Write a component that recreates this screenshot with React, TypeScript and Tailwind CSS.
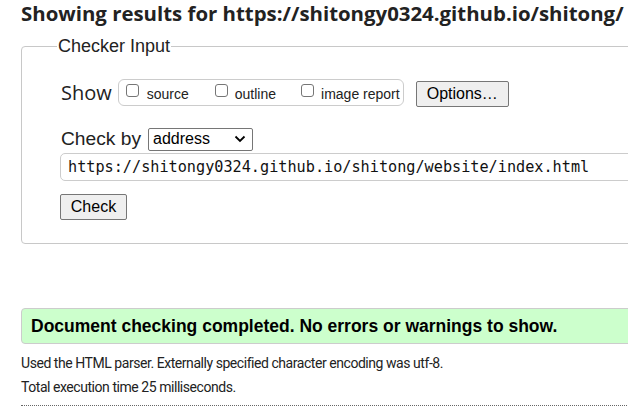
import React from "react";

export default function App() {
  const seg = { fontFamily: '"Open Sans", "Noto Sans", sans-serif' };
  const para = { fontFamily: 'Roboto, "Open Sans", sans-serif' };
  const arial = { fontFamily: '"Liberation Sans", Arial, sans-serif' };
  return (
    <div className="w-[628px] h-[411px] overflow-hidden bg-white text-[#222]">
      <div className="w-[800px] pl-[21px]">
        <h2
          className="text-[20.4px] font-bold leading-[24px] mt-[1px] text-[#222] whitespace-nowrap"
          style={seg}
        >
          Showing results for https://shitongy0324.github.io/shitong/
        </h2>
        <fieldset className="mt-[11px] w-[760px] border border-[#c8c8c8] rounded-[4px] pl-[39px] pt-[22px] pb-[23px]">
          <legend className="-ml-[4px] px-[1px] text-[18px] leading-[21px]" style={arial}>
            Checker Input
          </legend>
          <div className="flex items-center h-[27px]">
            <span className="text-[20px] mr-[6px] leading-[27px]" style={seg}>
              Show
            </span>
            <div
              className="flex items-center h-[27px] w-[286px] border border-[#ccc] rounded-[6px] pl-[7px] text-[14px]"
              style={arial}
            >
              <span className="w-[13px] h-[13px] border border-[#767676] rounded-[3px] mb-[4px] mr-[8px]" />
              <span className="mr-[26px] leading-[16px] mt-[3px]">source</span>
              <span className="w-[13px] h-[13px] border border-[#767676] rounded-[3px] mb-[4px] mr-[7px]" />
              <span className="mr-[25px] leading-[16px] mt-[3px]">outline</span>
              <span className="w-[13px] h-[13px] border border-[#767676] rounded-[3px] mb-[4px] mr-[7px]" />
              <span className="leading-[16px] mt-[3px]">image report</span>
            </div>
            <button
              className="ml-[12px] mt-[2px] h-[26px] w-[93px] bg-[#efefef] border border-[#767676] rounded-[2px] text-[16px] text-black"
              style={arial}
            >
              Options…
            </button>
          </div>
          <div className="flex items-center mt-[21px] h-[24px]">
            <span className="text-[19.2px] leading-[24px] mr-[7px]" style={arial}>
              Check by
            </span>
            <div
              className="flex items-center justify-between h-[23px] w-[105px] border border-[#767676] rounded-[2px] pl-[4px] pr-[6px] text-[16px] text-black"
              style={arial}
            >
              <span>address</span>
              <svg width="12" height="8" viewBox="0 0 12 8">
                <path d="M1.5 1.5 L6 6 L10.5 1.5" stroke="#000" strokeWidth="1.8" fill="none" />
              </svg>
            </div>
          </div>
          <div
            className="-ml-[1px] mt-[2px] h-[28px] w-[720px] border border-[#ccc] rounded-[5px] pl-[7px] flex items-center text-[15.2px] text-[#111]"
            style={{ fontFamily: '"DejaVu Sans Mono", "Liberation Mono", monospace' }}
          >
            https://shitongy0324.github.io/shitong/website/index.html
          </div>
          <button
            className="-ml-[1px] mt-[13px] h-[26px] w-[67px] bg-[#efefef] border border-[#767676] rounded-[2px] text-[16px] text-black"
            style={arial}
          >
            Check
          </button>
        </fieldset>
        <div
          className="mt-[64px] h-[36px] w-[760px] bg-[#ccffcc] border border-[#ccc] rounded-[4px] pl-[9px] flex items-center text-[17.5px] font-bold text-black"
          style={arial}
        >
          Document checking completed. No errors or warnings to show.
        </div>
        <p className="mt-[7px] text-[14px] tracking-[-0.45px] leading-[24px] text-[#222]" style={para}>
          Used the HTML parser. Externally specified character encoding was utf-8.
        </p>
        <p className="text-[14px] tracking-[-0.45px] leading-[24px] text-[#222]" style={para}>
          Total execution time 25 milliseconds.
        </p>
        <div className="mt-[6px] w-[760px] border-t border-dotted border-[#666]" />
      </div>
    </div>
  );
}
